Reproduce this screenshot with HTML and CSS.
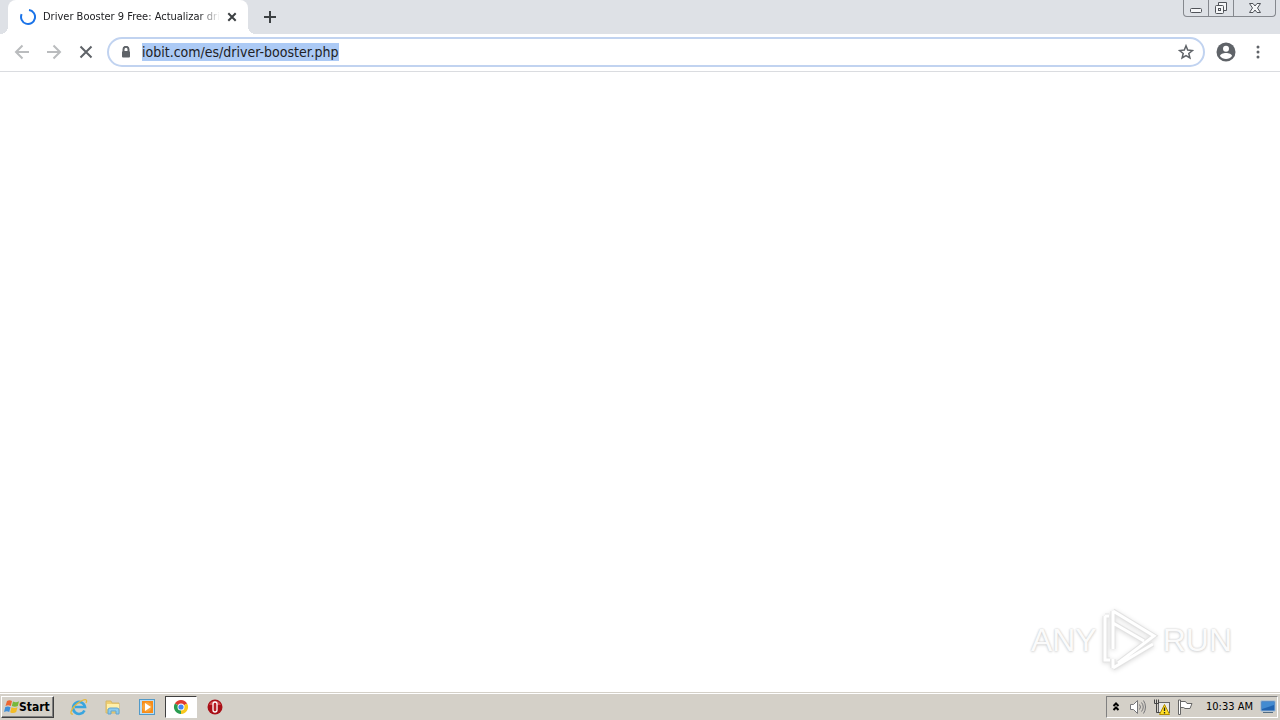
FILE: index.html
```html
<!DOCTYPE html>
<html lang="es">
<head>
<meta charset="utf-8">
<title>Driver Booster 9 Free</title>
<link rel="stylesheet" href="styles.css">
</head>
<body>
<header class="tabstrip">
  <div class="tab">
    <svg class="spinner" viewBox="0 0 16 16"><path d="M9 1A7 7 0 1 1 1.6 5.2"/></svg>
    <span class="tab-title">Driver Booster 9 Free: Actualizar dri</span>
    <button class="plain tab-close" aria-label="Cerrar"><svg width="10" height="10" viewBox="0 0 10 10"><path d="M1.300 1.300l7.400 7.400M8.700 1.300L1.300 8.700"/></svg></button>
  </div>
  <button class="plain new-tab" aria-label="Nueva"><svg width="12" height="12" viewBox="0 0 12 12"><path d="M6 0v12M0 6h12"/></svg></button>
  <div class="window-controls">
    <button class="minimize" aria-label="Minimizar"><svg width="14" height="16" viewBox="0 0 14 16"><rect x="1.500" y="8.500" width="11" height="4" rx="1"/></svg></button>
    <button class="restore" aria-label="Restaurar"><svg width="14" height="16" viewBox="0 0 14 16"><path d="M4.500 5V2.500h8v8H10"/><rect x="1.500" y="5.500" width="8" height="8" rx="1"/><rect x="4.500" y="8.500" width="2" height="2"/></svg></button>
    <button class="close" aria-label="Cerrar ventana"><svg width="14" height="16" viewBox="0 0 14 16"><path d="M1.500 3.500h3.500l2 2.500 2-2.500h3.500L9.500 8l3 4.500H9L7 10l-2 2.500H1.500l3-4.500z"/></svg></button>
  </div>
</header>
<nav class="toolbar">
  <button class="plain nav off" aria-label="Atrás"><svg width="16" height="16" viewBox="0 0 16 16"><path d="M15 8H2M8.500 1.500L2 8l6.500 6.500"/></svg></button>
  <button class="plain nav off" aria-label="Adelante"><svg width="16" height="16" viewBox="0 0 16 16"><path d="M1 8h13M7.500 1.500L14 8l-6.500 6.500"/></svg></button>
  <button class="plain nav" aria-label="Detener"><svg width="16" height="16" viewBox="0 0 16 16"><path d="M2.500 2.500l11 11M13.500 2.500l-11 11"/></svg></button>
  <div class="omnibox">
    <svg class="lock" width="10" height="12" viewBox="0 0 10 12"><path d="M2.500 5V3.300a2.500 2.500 0 0 1 5 0V5"/><rect x="1" y="5" width="8" height="6.500" rx="1"/></svg>
    <input class="url" aria-label="Dirección" value="iobit.com/es/driver-booster.php" spellcheck="false">
    <button class="plain star" aria-label="Favorito"><svg width="16" height="16" viewBox="0 0 16 16"><path d="M8 1.800l1.700 4.300 4.700.4-3.600 3 1.100 4.500L8 11.600 4.100 14l1.100-4.500-3.600-3 4.700-.4z"/></svg></button>
  </div>
  <button class="plain profile" aria-label="Perfil"><svg width="20" height="20" viewBox="0 0 20 20"><circle cx="10" cy="10" r="9.500" fill="#5f6368"/><circle cx="10" cy="6.800" r="3" fill="#fff"/><path d="M4 14c.5-4 11.500-4 12 0-2.500 4-9.500 4-12 0z" fill="#fff"/></svg></button>
  <button class="plain menu" aria-label="Menú"><svg width="4" height="14" viewBox="0 0 4 14"><circle cx="2" cy="2" r="1.500"/><circle cx="2" cy="7" r="1.500"/><circle cx="2" cy="12" r="1.500"/></svg></button>
</nav>
<main class="page">
  <div class="watermark">
    <span>ANY</span>
    <svg width="60" height="64" viewBox="0 0 60 64"><path d="M13 3v38M13 3l41 25L18 55M13 15l31 18M13 60l40-24M13 60V51M5 8v44h5M5 8h4"/><path class="face" d="M13 3v38M13 3l41 25L18 55M13 15l31 18M13 60l40-24M13 60V51M5 8v44h5M5 8h4"/></svg>
    <span>RUN</span>
  </div>
</main>
<footer class="taskbar">
  <button class="start">
    <svg width="16" height="16" viewBox="0 0 16 16"><path d="M3 2q2.500-1.500 5 0L6.800 7Q4 5.500 1.500 7z" fill="#ed6631"/><path d="M9 2.500q3 1.500 6-.2L13.800 7Q11 8.500 7.800 7z" fill="#78b83b"/><path d="M1.300 8Q4 6.700 6.500 8.200L5.200 13Q3 11.500 0 13z" fill="#3f8fd9"/><path d="M7.500 8.300q3 1.500 6 0L12.200 13q-3 2-6 .2z" fill="#f3bc27"/></svg>
    <span>Start</span>
  </button>
  <div class="launchers">
    <button class="plain app" aria-label="Internet Explorer"><svg width="18" height="18" viewBox="0 0 18 18"><path d="M14.500 12.500A6 6 0 1 1 15 9H5" fill="none" stroke="#39a5df" stroke-width="2.600"/><path d="M3 16C-1 17 1 10 8 5s10-4 8 0" fill="none" stroke="#e5b83c" stroke-width="1.300"/></svg></button>
    <button class="plain app" aria-label="Explorador"><svg width="18" height="18" viewBox="0 0 18 18"><path d="M2 3h5l1 2h7v10H2z" fill="#f0cf70" stroke="#d5b869"/><path d="M3 6h12v5H3z" fill="#fff0a9"/><path d="M4 16v-4q0-2 2-2h7q2 0 2 2v4h-3v-3H7v3z" fill="#8bcbee" stroke="#62a5d0"/></svg></button>
    <button class="plain app" aria-label="Media Player"><svg width="18" height="18" viewBox="0 0 18 18"><rect x="1.500" y="1.500" width="15" height="15" fill="#b9ddf4" stroke="#529ac8"/><rect x="4" y="3" width="11" height="12" fill="#f78c19"/><circle cx="9" cy="9" r="4.800" fill="#f9a43a"/><path d="M7 5l6 4-6 4z" fill="#fff"/></svg></button>
    <button class="plain app active" aria-label="Chrome"><svg width="16" height="16" viewBox="0 0 16 16"><path d="M8 8L1.900 4.500a7 7 0 0 1 12.200 0z" fill="#de3b30"/><path d="M8 8l6.100-3.500A7 7 0 0 1 8 15z" fill="#f9c81c"/><path d="M8 8v7A7 7 0 0 1 1.900 4.500z" fill="#299c50"/><circle cx="8" cy="8" r="3.500" fill="#fff"/><circle cx="8" cy="8" r="2.600" fill="#4285f4"/></svg></button>
    <button class="plain app" aria-label="Opera"><svg width="16" height="16" viewBox="0 0 16 16"><circle cx="8" cy="8" r="7.500" fill="#a90f17"/><path d="M2 6a6.500 6.500 0 0 1 12 0z" fill="#d24a4d"/><rect x="6" y="3" width="4" height="10" rx="2" fill="#b91c22" stroke="#fff" stroke-width="1.300"/></svg></button>
  </div>
  <div class="tray">
    <svg class="expand" width="8" height="12" viewBox="0 0 8 12"><path d="M1.500 5L4 2.500 6.500 5M1.500 9L4 6.500 6.500 9"/></svg>
    <svg width="18" height="16" viewBox="0 0 18 16" fill="#fff" stroke="#77777a"><path d="M1.500 5.500h3l4-4v13l-4-4h-3z"/><path d="M10.500 5.500q2 2.500 0 5M12.500 3.500q3.500 4.500 0 9M14.500 1.500q4 6.500 0 13" fill="none"/></svg>
    <svg width="18" height="16" viewBox="0 0 18 16"><rect x="5.500" y="3.500" width="11" height="10" fill="#e9e9e7" stroke="#666"/><path d="M1.500.5v4h4v-4M3.500.5v13h3" fill="none" stroke="#444"/><path d="M11.500 5.500l5 10h-10z" fill="#ffdf25" stroke="#b18c00"/><path d="M11.500 8.500v3.500m0 1v1.500" stroke="#222" stroke-width="1.300"/></svg>
    <svg width="16" height="16" viewBox="0 0 16 16" fill="#fff" stroke="#666"><path d="M1.500 1v14.500h2V1zM3.500 2.500h5l1.500 2h5l-2 5H8l-1.500-1h-3z"/></svg>
    <time>10:33 AM</time>
    <svg width="16" height="14" viewBox="0 0 16 14"><path d="M1 1h14v10H1z" fill="#2163b0" stroke="#95b7d9"/><path d="M2 2h12v3L2 9z" fill="#438bd1"/><path d="M3 12.500h10" stroke="#536d83"/></svg>
  </div>
</footer>
<script src="page.js"></script>
</body>
</html>
```
FILE: page.js
```js
const address = document.querySelector('.url');
address.focus();
address.select();
```
FILE: styles.css
```css
* { box-sizing: border-box; }
html, body { height: 100%; }
body {
  margin: 0;
  min-height: 100vh;
  display: flex;
  flex-direction: column;
  overflow: hidden;
  background: #fff;
  color: #202124;
  font: 11px/16px "DejaVu Sans Condensed", "DejaVu Sans", sans-serif;
}
button { font: inherit; color: inherit; margin: 0; padding: 0; }
svg { display: block; flex: none; }
.plain {
  display: flex;
  align-items: center;
  justify-content: center;
  border: 0;
  background: none;
  flex: none;
}
.tabstrip {
  height: 34px;
  flex: none;
  display: flex;
  padding-left: 8px;
  background: #dee1e6;
}
.tab {
  position: relative;
  width: 240px;
  display: flex;
  align-items: center;
  padding: 0 8px 0 12px;
  background: #fff;
  border-radius: 8px 8px 0 0;
}
.tab::before, .tab::after {
  content: "";
  position: absolute;
  bottom: 0;
  width: 8px;
  height: 8px;
}
.tab::before { left: -8px; background: radial-gradient(circle at 0 0, #dee1e6 8px, #fff 8px); }
.tab::after { right: -8px; background: radial-gradient(circle at 100% 0, #dee1e6 8px, #fff 8px); }
.spinner { width: 16px; height: 16px; margin-right: 7px; fill: none; stroke: #1a73e8; stroke-width: 2; }
.tab-title {
  flex: 1;
  min-width: 0;
  white-space: nowrap;
  mask-image: linear-gradient(90deg, #000 88%, transparent);
}
.tab-close { width: 16px; height: 16px; margin-left: 4px; stroke: #3c4043; stroke-width: 2; }
.new-tab { width: 28px; margin-left: 8px; stroke: #3c4043; stroke-width: 2; }
.window-controls {
  display: flex;
  height: 17px;
  margin-left: auto;
  margin-right: 4px;
  border: 1px solid #85888e;
  border-top: 0;
  border-radius: 0 0 4px 4px;
}
.window-controls button {
  display: flex;
  align-items: center;
  justify-content: center;
  width: 25px;
  border: 0;
  border-right: 1px solid #85888e;
  background: none;
}
.window-controls .close { width: 41px; border: 0; }
.window-controls svg { fill: #f5f6f8; stroke: #505359; }
.toolbar {
  height: 38px;
  flex: none;
  display: flex;
  align-items: center;
  padding: 0 10px 1px 6px;
  border-bottom: 1px solid #dadce0;
}
.nav { width: 32px; height: 32px; fill: none; stroke: #5f6368; stroke-width: 2; }
.nav.off { stroke: #babcbe; }
.omnibox {
  display: flex;
  align-items: center;
  flex: 1;
  height: 30px;
  margin: 0 9px 0 5px;
  padding: 0 9px 0 12px;
  border: 2px solid #c1d3f0;
  border-radius: 15px;
}
.lock { fill: #5f6368; stroke: none; }
.lock path { fill: none; stroke: #5f6368; stroke-width: 2; }
.url {
  flex: 1;
  min-width: 0;
  height: 18px;
  margin-left: 11px;
  padding: 0;
  border: 0;
  outline: 0;
  background: none;
  color: #202124;
  font: 14px/18px "DejaVu Sans Condensed", "DejaVu Sans", sans-serif;
}
.url::selection { background: #accaf5; color: #202124; }
.star path { fill: none; stroke: #5f6368; stroke-width: 1.5; }
.profile { width: 24px; height: 24px; }
.menu { width: 24px; height: 24px; margin-left: 8px; fill: #5f6368; }
.page {
  flex: 1;
  min-height: 0;
  display: flex;
  align-items: flex-end;
  justify-content: flex-end;
  padding: 0 48px 20px 0;
}
.watermark {
  display: flex;
  align-items: center;
  gap: 3px;
  color: #fbfbfb;
  font: 32px/56px "Liberation Sans Narrow", "Liberation Sans", sans-serif;
  text-shadow: 0 0 2px #c5c5c5, 0 1px 3px #ddd;
}
.watermark svg { fill: none; stroke: #e3e3e3; stroke-width: 5; filter: drop-shadow(0 1px 2px #ddd); }
.watermark .face { stroke: #fff; stroke-width: 3; }
.taskbar {
  height: 28px;
  flex: none;
  display: flex;
  align-items: center;
  padding: 2px 2px 2px 1px;
  border-top: 1px solid #d4d0c8;
  background: #d4d0c8;
  box-shadow: inset 0 1px #fff;
  color: #000;
}
.start {
  display: flex;
  align-items: center;
  height: 22px;
  padding: 0 3px 0 2px;
  border: 1px solid;
  border-color: #fff #404040 #404040 #fff;
  background: #d4d0c8;
  box-shadow: inset -1px -1px #808080;
  font-weight: bold;
  font-size: 12px;
}
.start span { margin-left: -1px; }
.launchers { display: flex; margin-left: 9px; gap: 2px; }
.app { width: 32px; height: 22px; }
.active {
  border: 1px solid;
  border-color: #404040 #fff #fff #404040;
  background: #fff;
}
.tray {
  display: flex;
  align-items: center;
  gap: 6px;
  height: 22px;
  margin-left: auto;
  padding: 0 1px 0 5px;
  border: 1px solid;
  border-color: #808080 #fff #fff #808080;
}
.expand { margin-right: 3px; fill: none; stroke: #000; stroke-width: 2; }
.tray time { margin: 0 1px 0 7px; }
```
